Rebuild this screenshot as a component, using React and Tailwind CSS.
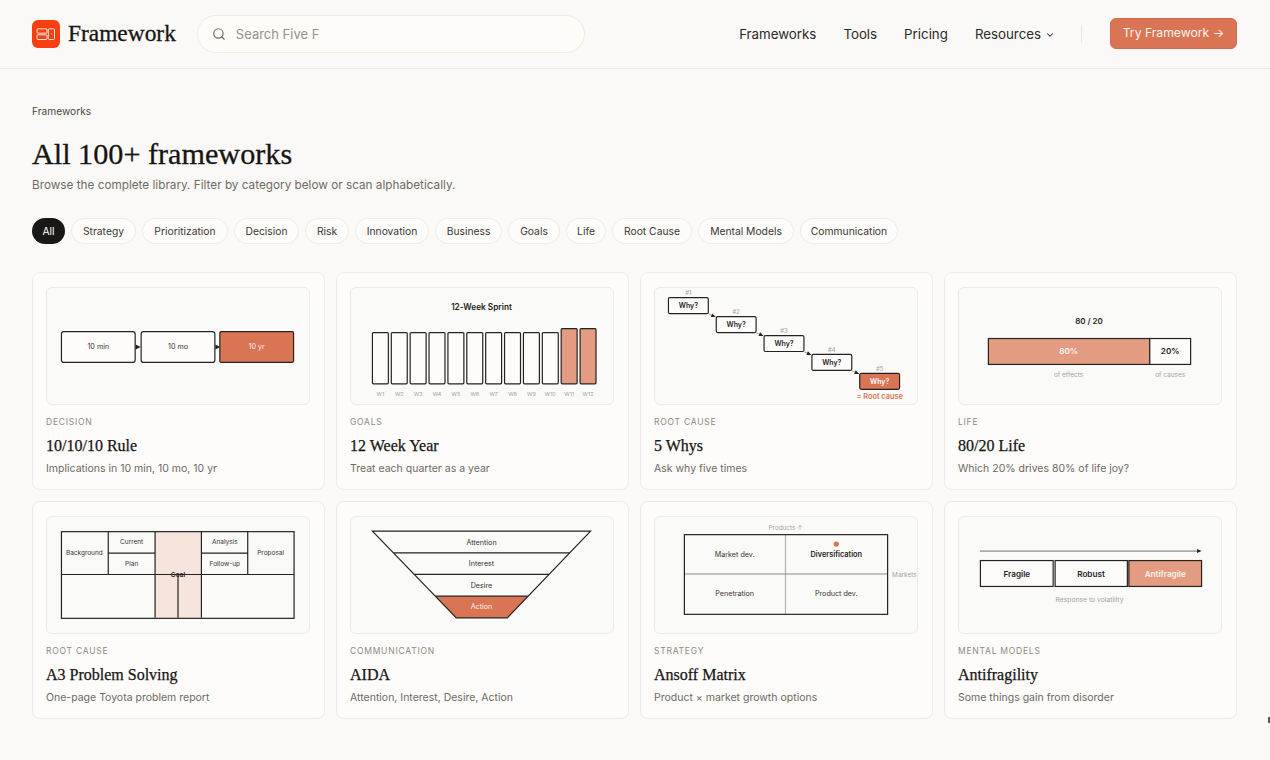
import { Search, ChevronDown } from "lucide-react";

const INK = "#25221f";
const CORAL = "#d97455";
const PEACH = "#e39c82";
const MUTED = "#a8a29b";
const SW = 1.2;

const chips = [
  { name: "Strategy", w: "w-[65px]" },
  { name: "Prioritization", w: "w-[86px]" },
  { name: "Decision", w: "w-[65px]" },
  { name: "Risk", w: "w-[44px]" },
  { name: "Innovation", w: "w-[74px]" },
  { name: "Business", w: "w-[67px]" },
  { name: "Goals", w: "w-[52px]" },
  { name: "Life", w: "w-[40px]" },
  { name: "Root Cause", w: "w-[80px]" },
  { name: "Mental Models", w: "w-[96px]" },
  { name: "Communication", w: "w-[98px]" },
];

const Label = ({ x, y, size = 7.2, fill = "#37332f", bold, children, anchor = "middle" }) => (
  <text x={x} y={y} fontSize={size} fill={fill} fontWeight={bold ? 600 : 400} textAnchor={anchor} dominantBaseline="central" fontFamily="Inter, sans-serif">
    {children}
  </text>
);

const Svg = ({ children }) => (
  <svg viewBox="1 1 263 116" className="block w-full h-full">
    {children}
  </svg>
);

const RuleDiagram = () => (
  <Svg>
    <rect x="15.5" y="44.5" width="74" height="31" rx="2.5" fill="#fdfcfa" stroke={INK} strokeWidth={SW} />
    <rect x="95.5" y="44.5" width="74" height="31" rx="2.5" fill="#fdfcfa" stroke={INK} strokeWidth={SW} />
    <rect x="174.5" y="44.5" width="74" height="31" rx="1.5" fill={CORAL} stroke={INK} strokeWidth={SW} />
    <path d="M90 57.5l5 2.5-5 2.5z M170 57.5l5 2.5-5 2.5z" fill={INK} />
    <Label x="52.5" y="60">10 min</Label>
    <Label x="132.5" y="60">10 mo</Label>
    <Label x="211.5" y="60" fill="#fdf3ee">10 yr</Label>
  </Svg>
);

const SprintDiagram = () => (
  <Svg>
    <Label x="132" y="19.5" size="8.3" fill={INK} bold>12-Week Sprint</Label>
    {Array.from({ length: 12 }).map((_, i) => {
      const x = 22.5 + i * 18.95;
      const hot = i > 9;
      return (
        <g key={i}>
          <rect x={x} y={hot ? 41.5 : 45.5} width="16" height={hot ? 55.5 : 51.5} rx="1" fill={hot ? PEACH : "#fdfcfa"} stroke={INK} strokeWidth={SW} />
          <Label x={x + 8} y="107.5" size="5.5" fill={MUTED}>{"W" + (i + 1)}</Label>
        </g>
      );
    })}
  </Svg>
);

const WhysDiagram = () => (
  <Svg>
    {[0, 1, 2, 3, 4].map((i) => {
      const x = 14 + i * 48;
      const y = 10 + i * 19;
      const last = i === 4;
      return (
        <g key={i}>
          <Label x={x + 20.5} y={y - 4.5} size="6" fill={MUTED}>{"#" + (i + 1)}</Label>
          {!last && <line x1={x + 41} y1={y + 17} x2={x + 45} y2={y + 18.5} stroke={MUTED} />}
          {!last && <path d={`M${x + 44.5} ${y + 16.3}L${x + 43} ${y + 20}H${x + 48}z`} fill={INK} />}
          <rect x={x + 0.5} y={y + 0.5} width="40" height="16" rx="1.5" fill={last ? CORAL : "#fdfcfa"} stroke={INK} strokeWidth={SW} />
          <Label x={x + 20.5} y={y + 8.8} size="7" bold fill={last ? "#fff" : INK}>Why?</Label>
        </g>
      );
    })}
    <Label x="226.5" y="110" size="7.4" fill={CORAL} bold>= Root cause</Label>
  </Svg>
);

const LifeDiagram = () => (
  <Svg>
    <Label x="131.5" y="34" size="8" fill={INK} bold>80 / 20</Label>
    <rect x="30.5" y="51.5" width="162" height="26" fill={PEACH} stroke={INK} strokeWidth={SW} />
    <rect x="192.5" y="51.5" width="41" height="26" fill="#fdfcfa" stroke={INK} strokeWidth={SW} />
    <Label x="111" y="64.5" size="8.2" bold fill="#fdf3ee">80%</Label>
    <Label x="213" y="64.5" size="8.2" fill={INK} bold>20%</Label>
    <Label x="111" y="88" size="6.5" fill={MUTED}>of effects</Label>
    <Label x="213" y="88" size="6.5" fill={MUTED}>of causes</Label>
  </Svg>
);

const A3Diagram = () => (
  <Svg>
    <rect x="109" y="15" width="47" height="87" fill="#f5e5dd" />
    <g stroke={INK} fill="none" strokeWidth={SW}>
      <rect x="15.5" y="15.5" width="233.5" height="87" />
      <path d="M62.5 15v43M109.5 15v87M156 15v87M202.5 15v43M15 58.5h234M62 37h47M156 37h47M132.5 58v44" />
    </g>
    <Label x="38.5" y="37" size="6.5">Background</Label>
    <Label x="86" y="26" size="6.5">Current</Label>
    <Label x="86" y="47.5" size="6.5">Plan</Label>
    <Label x="132.5" y="59" size="6.5" fill={INK} bold>Goal</Label>
    <Label x="179.5" y="26" size="6.5">Analysis</Label>
    <Label x="179.5" y="47.5" size="6.5">Follow-up</Label>
    <Label x="225.5" y="37" size="6.5">Proposal</Label>
  </Svg>
);

const AidaDiagram = () => (
  <Svg>
    <path d="M85.7 80.3H178.3L158 102H106.7z" fill={CORAL} />
    <path d="M22.5 15H241.5L158 102H106.7zM43.5 36.7H220.5M64.4 58.3H199.6M85.7 80.3H178.3" fill="none" stroke={INK} strokeWidth={SW} />
    <Label x="132" y="26">Attention</Label>
    <Label x="132" y="47.5">Interest</Label>
    <Label x="132" y="69.5">Desire</Label>
    <Label x="132" y="91" fill="#fdf3ee">Action</Label>
  </Svg>
);

const AnsoffDiagram = () => (
  <Svg>
    <Label x="132" y="12" size="6.4" fill={MUTED}>Products ↑</Label>
    <line x1="132" y1="18" x2="132" y2="98" stroke="#b5b0aa" strokeWidth={SW} />
    <line x1="30" y1="58" x2="234" y2="58" stroke="#8f8a85" />
    <rect x="30.5" y="18.5" width="204" height="80" fill="none" stroke={INK} strokeWidth={SW} />
    <circle cx="183" cy="28" r="2.7" fill={CORAL} />
    <Label x="81" y="38">Market dev.</Label>
    <Label x="183" y="38" size="7.4" fill={INK} bold>Diversification</Label>
    <Label x="81" y="78">Penetration</Label>
    <Label x="183" y="78">Product dev.</Label>
    <Label x="239" y="59" size="6.5" fill={MUTED} anchor="start">Markets</Label>
  </Svg>
);

const AntifragileDiagram = () => (
  <Svg>
    <line x1="22" y1="35" x2="241" y2="35" stroke="#55504b" strokeWidth="0.8" />
    <path d="M240 33l4.5 2-4.5 2z" fill={INK} />
    <rect x="22.5" y="44.5" width="73" height="26" fill="#fdfcfa" stroke={INK} strokeWidth={SW} />
    <rect x="97.5" y="44.5" width="72.5" height="26" fill="#fdfcfa" stroke={INK} strokeWidth={SW} />
    <rect x="171.5" y="44.5" width="73" height="26" fill={PEACH} stroke={INK} strokeWidth={SW} />
    <Label x="59" y="57.5" size="8.2" fill={INK} bold>Fragile</Label>
    <Label x="133.5" y="57.5" size="8.2" fill={INK} bold>Robust</Label>
    <Label x="208" y="57.5" size="8.2" bold fill="#fdf3ee">Antifragile</Label>
    <Label x="132" y="84" size="6.8" fill={MUTED}>Response to volatility</Label>
  </Svg>
);

const cards = [
  { cat: "Decision", title: "10/10/10 Rule", desc: "Implications in 10 min, 10 mo, 10 yr", art: <RuleDiagram /> },
  { cat: "Goals", title: "12 Week Year", desc: "Treat each quarter as a year", art: <SprintDiagram /> },
  { cat: "Root Cause", title: "5 Whys", desc: "Ask why five times", art: <WhysDiagram /> },
  { cat: "Life", title: "80/20 Life", desc: "Which 20% drives 80% of life joy?", art: <LifeDiagram /> },
  { cat: "Root Cause", title: "A3 Problem Solving", desc: "One-page Toyota problem report", art: <A3Diagram /> },
  { cat: "Communication", title: "AIDA", desc: "Attention, Interest, Desire, Action", art: <AidaDiagram /> },
  { cat: "Strategy", title: "Ansoff Matrix", desc: "Product × market growth options", art: <AnsoffDiagram /> },
  { cat: "Mental Models", title: "Antifragility", desc: "Some things gain from disorder", art: <AntifragileDiagram /> },
];

const Card = ({ cat, title, desc, art }) => (
  <div className="h-[218px] rounded-lg border border-[#ecebe6] bg-[#fdfcfa] px-[13px] pt-[14px] pr-[14px]">
    <div className="h-[118px] overflow-hidden rounded-md border border-[#ecebe6] bg-[#fafaf8]">{art}</div>
    <p className="mt-[11px] text-[8.5px] leading-3 tracking-[0.09em] uppercase text-[#8f8880]">{cat}</p>
    <h3 className="mt-[8px] font-['Liberation_Serif',serif] text-[16px] leading-5 text-[#171513] [-webkit-text-stroke:0.25px_#171513]">{title}</h3>
    <p className="mt-[5px] text-[10.5px] leading-4 text-[#6f6963]">{desc}</p>
  </div>
);

export default function App() {
  return (
    <div className="relative min-h-[760px] overflow-hidden bg-[#faf9f7] font-['Inter',sans-serif]">
      <header className="flex h-[69px] items-center border-b border-[#e9e8e5] pl-8 pr-[33px]">
        <div className="flex h-7 w-7 items-center justify-center rounded-md bg-[#f93f0f]">
          <svg viewBox="0 0 20 20" className="h-5 w-5" fill="none" stroke="#ffe9e0" strokeWidth="1">
            <rect x="1" y="4.8" width="10" height="4.4" rx="1" />
            <rect x="1" y="10.8" width="10" height="4.7" rx="1" />
            <rect x="12.3" y="4.8" width="6.2" height="10.7" rx="1" />
            <circle cx="15.7" cy="9.8" r="0.6" fill="#ffe9e0" stroke="none" />
          </svg>
        </div>
        <span className="ml-2 font-['Liberation_Serif',serif] text-[23.4px] leading-none text-[#171513] [-webkit-text-stroke:0.3px_#171513]">Framework</span>
        <div className="ml-[21px] mb-px flex h-[38px] w-[388px] items-center rounded-full border border-[#eeebdf] bg-[#fdfcf8] pl-[14px]">
          <Search size={14} className="text-[#6f6963]" />
          <span className="ml-[10px] pt-[2px] text-[13px] text-[#9a9089]">Search Five F</span>
        </div>
        <nav className="ml-auto flex items-center pt-px text-[13.3px] text-[#2b2926]">
          <span>Frameworks</span>
          <span className="ml-[27px]">Tools</span>
          <span className="ml-[27px]">Pricing</span>
          <span className="ml-[27px] flex items-center gap-1">Resources <ChevronDown size={10} strokeWidth={2.5} /></span>
        </nav>
        <div className="ml-[26px] h-[18px] w-px bg-[#e9e8e5]" />
        <button className="ml-7 mb-[2px] h-[31px] w-[127px] rounded-md border border-[#d06c4e] bg-[#d97455] pt-px text-[12.2px] text-[#fff6f1]">Try Framework →</button>
      </header>

      <main className="pl-8 pr-[33px]">
        <p className="mt-9 text-[10.2px] leading-3 text-[#4b4743]">Frameworks</p>
        <h1 className="mt-[19px] font-['Liberation_Serif',serif] text-[30.2px] leading-9 text-[#171513] [-webkit-text-stroke:0.3px_#171513]">All 100+ frameworks</h1>
        <p className="mt-[5px] text-[11.75px] leading-4 text-[#6f6963]">Browse the complete library. Filter by category below or scan alphabetically.</p>
        <div className="mt-[25px] flex gap-[6px]">
          <span className="flex h-[26px] w-[33px] items-center justify-center rounded-full bg-[#1a1817] pt-px text-[10.3px] text-white">All</span>
          {chips.map((c) => (
            <span key={c.name} className={`${c.w} flex h-[26px] items-center justify-center rounded-full border border-[#ecebe4] bg-[#fdfcfa] pt-px text-[10.3px] text-[#3a3733]`}>{c.name}</span>
          ))}
        </div>
        <div className="mt-[28px] grid grid-cols-4 gap-[11px]">
          {cards.map((c) => (
            <Card key={c.title} {...c} />
          ))}
        </div>
      </main>

      {/* sliver of something cut off by the window edge */}
      <div className="absolute right-0 top-[717px] h-[6px] w-[2px] bg-[#5a5754]" />
    </div>
  );
}
